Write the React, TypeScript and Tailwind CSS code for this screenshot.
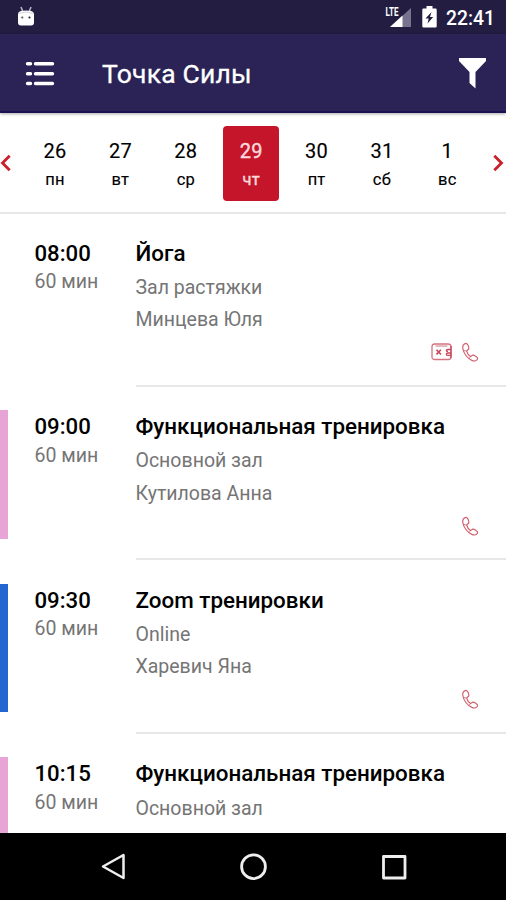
const days = [
  { n: '26', d: 'пн' },
  { n: '27', d: 'вт' },
  { n: '28', d: 'ср' },
  { n: '29', d: 'чт', active: true },
  { n: '30', d: 'пт' },
  { n: '31', d: 'сб' },
  { n: '1', d: 'вс' },
];

const classes = [
  { time: '08:00', title: 'Йога', place: 'Зал растяжки', coach: 'Минцева Юля', bar: 'bg-white', paid: true },
  { time: '09:00', title: 'Функциональная тренировка', place: 'Основной зал', coach: 'Кутилова Анна', bar: 'bg-[#e6a5d6]' },
  { time: '09:30', title: 'Zoom тренировки', place: 'Online', coach: 'Харевич Яна', bar: 'bg-[#2366cf]' },
  { time: '10:15', title: 'Функциональная тренировка', place: 'Основной зал', bar: 'bg-[#e6a5d6]' },
];

function StatusBar() {
  return (
    <div className="flex h-[34px] shrink-0 items-center bg-[#231d42] text-white">
      <svg className="mb-[3px] ml-[17px] block" width="18" height="22" viewBox="0 0 18 22">
        <path d="M4 2l2 5M14 2l-2 5" stroke="#b5b2c4" strokeWidth="1.6" />
        <path d="M1 9.500q0-3 3-3.500 5-1 10 0 3 .5 3 3.500v8q0 3-3 3H4q-3 0-3-3z" fill="#fff" />
        <path d="M1.500 8.500q7.500-3 15 0" stroke="#d2cfdd" fill="none" />
        <circle cx="5.300" cy="12.500" r="1.100" fill="#555" />
        <circle cx="12.500" cy="12.500" r="1.100" fill="#222" />
      </svg>
      <div className="ml-auto flex items-center">
        <svg className="block" width="27" height="24" viewBox="0 0 27 24">
          <path d="M26 3v19H5z" fill="#77738e" />
          <path d="M17.500 10.500v11.500H5z" fill="#fff" />
          <text x="0.500" y="11" fontSize="12" fontWeight="700" textLength="13" lengthAdjust="spacingAndGlyphs" fill="#fff" stroke="#231d42" strokeWidth="1.500" paintOrder="stroke">LTE</text>
        </svg>
        <svg className="ml-[10px] block" width="15" height="22" viewBox="0 0 15 22">
          <path d="M4.500 0h6v2.500h3q1.200 0 1.200 1.200v16.600q0 1.200-1.200 1.200h-12Q.3 21.500.3 20.300V3.700Q.3 2.500 1.500 2.500h3z" fill="#fff" />
          <path d="M9.500 6L3.500 12.500h3.200L5.500 17.500l5.700-6.500H8z" fill="#231d42" />
        </svg>
        <span className="ml-[9px] mr-[11px] mt-[3px] w-[49px] whitespace-nowrap text-[19.300px] font-medium leading-6">22:41</span>
      </div>
    </div>
  );
}

function AppBar() {
  return (
    <header className="z-10 flex h-[79px] shrink-0 items-center border-b-2 border-[#181154] bg-[#2b2356] text-white shadow-[0_1px_3px_rgba(0,0,0,0.35)]">
      <svg className="ml-[25px] mt-[2px] block" width="30" height="26" viewBox="0 0 30 26" stroke="#fff" strokeWidth="3.400" strokeLinecap="round">
        <path d="M2.500 2.700h3M10.500 2.700h17M2.500 12.700h3M10.500 12.700h17M2.500 22.500h3M10.500 22.500h17" />
      </svg>
      <h1 className="ml-[47px] mt-[3px] text-[26.500px] font-normal leading-8 tracking-[0.200px] [-webkit-text-stroke:0.3px_white]">Точка Силы</h1>
      <svg className="ml-auto mr-[19px] mt-[1px] block" width="29" height="31" viewBox="0 0 29 31">
        <path d="M1 0h27v3L17.500 14v16.500L11.500 25V14L1 3z" fill="#fff" />
      </svg>
    </header>
  );
}

function Chevron({ flip = false }: { flip?: boolean }) {
  return (
    <svg className={flip ? 'block rotate-180' : 'block'} width="11" height="18" viewBox="0 0 11 18">
      <path d="M9.700 1.800L2.500 9l7.200 7.200" fill="none" stroke="#c9202c" strokeWidth="2.800" />
    </svg>
  );
}

function WeekStrip() {
  return (
    <nav className="flex h-[101px] shrink-0 items-center border-b-2 border-[#e8e8e8] pt-[1px] text-black">
      <Chevron />
      <div className="ml-[16px] flex gap-[9.400px]">
        {days.map((day) => (
          <div key={day.n} className={day.active ? 'flex h-[75px] w-[56px] flex-col items-center rounded-[4px] bg-[#c4152b] pt-[12.500px] text-[#fbd9dc] [-webkit-text-stroke:0.4px_#fbd9dc]' : 'flex h-[75px] w-[56px] flex-col items-center pt-[12.500px] [-webkit-text-stroke:0.15px_black]'}>
            <span className="text-[20px] leading-[26px] tracking-[0.2px]">{day.n}</span>
            <span className="mt-[4px] text-[16.500px] leading-[24px] tracking-[0.2px]">{day.d}</span>
          </div>
        ))}
      </div>
      <div className="ml-auto mr-[2px]"><Chevron flip /></div>
    </nav>
  );
}

function Wallet() {
  return (
    <svg className="block" width="22" height="19" viewBox="0 0 22 19" fill="none" stroke="#d27480" strokeWidth="1.300">
      <path d="M3.500 2h13.500q3 0 3 3v10q0 2.500-2.500 2.500h-14q-2.500 0-2.500-2.500V4.500Q1 2 3.500 2z" />
      <path d="M4.500 4h12" strokeWidth="1" />
      <path d="M20 4v12M20 7.500h-3q-1.700 0-1.700 1t1.700 1M20 11h-3q-1.700 0-1.700 1.200t1.700 1.200h3" stroke="#c84858" />
      <path d="M5.500 7.800l4.400 4.600M9.900 7.800l-4.400 4.600" stroke="#c84858" strokeWidth="1.600" />
    </svg>
  );
}

function Phone() {
  return (
    <svg className="block" width="18" height="20" viewBox="0 0 18 20" fill="none" stroke="#d0606d" strokeWidth="1.200" strokeLinejoin="round">
      <path d="M5 1.300C2.700 1.800 1.400 3.800 1.800 6.500 2.600 11.500 6.500 16.800 11.300 18.600c2.200.8 4.700-.1 5.400-2 .3-1.100-3.300-3.500-4.800-3.400-1.200.2-1.500 1.400-2.400 1.200C7.900 13.500 6.100 11 5.700 9.200c0-1 1.700-1.300 2.100-2.500C8.200 5.500 6.700 1.200 5 1.300z" />
      <path d="M5.700 9.200L2.200 8.300M9.500 14.400l-1.300 2.200" strokeWidth="0.800" />
    </svg>
  );
}

export default function App() {
  return (
    <div className="flex h-[900px] w-[506px] flex-col overflow-hidden bg-white font-[Roboto,sans-serif]">
      <StatusBar />
      <AppBar />
      <WeekStrip />
      <main className="h-[619px] shrink-0 overflow-hidden">
        {classes.map((item) => (
          <article key={item.time} className="flex h-[173.600px]">
            <div className={`mt-[22.700px] h-[128.500px] w-[8px] shrink-0 ${item.bar}`} />
            <div className="ml-[26.500px] w-[101px] shrink-0 pt-[24.700px]">
              <div className="text-[22.200px] font-medium leading-[28px] text-black">{item.time}</div>
              <div className="mt-[1.500px] text-[19.500px] leading-[28px] text-[#757575]">60 мин</div>
            </div>
            <div className="flex flex-1 flex-col whitespace-nowrap pt-[24.700px]">
              <div className="text-[22.400px] font-medium leading-[28px] text-black">{item.title}</div>
              <div className="mt-[5.200px] text-[19.500px] leading-[32.300px] text-[#757575]">{item.place}</div>
              {item.coach && (
                <>
                  <div className="text-[19.500px] leading-[32.300px] text-[#757575]">{item.coach}</div>
                  <div className="mr-[27px] mt-[5.500px] flex items-center justify-end gap-[8px]">
                    {item.paid && <Wallet />}
                    <Phone />
                  </div>
                </>
              )}
              <div className="mb-[1px] mt-auto h-[2px] bg-[#e8e8e8]" />
            </div>
          </article>
        ))}
      </main>
      <footer className="flex h-[67px] shrink-0 items-center justify-between bg-black pl-[100px] pr-[98px]">
        <svg className="block" width="28" height="30" viewBox="0 0 28 30" fill="none" stroke="#eee" strokeWidth="2.500" strokeLinejoin="round">
          <path d="M23.500 3v23L3 14.500z" />
        </svg>
        <svg className="block" width="28" height="28" viewBox="0 0 28 28" fill="none" stroke="#eee" strokeWidth="2.800">
          <circle cx="13.500" cy="13.700" r="11.900" />
        </svg>
        <svg className="block" width="28" height="28" viewBox="0 0 28 28" fill="none" stroke="#eee" strokeWidth="2.800" strokeLinejoin="round">
          <path d="M3.500 3.500h21.500v21.500h-21.500z" />
        </svg>
      </footer>
    </div>
  );
}
